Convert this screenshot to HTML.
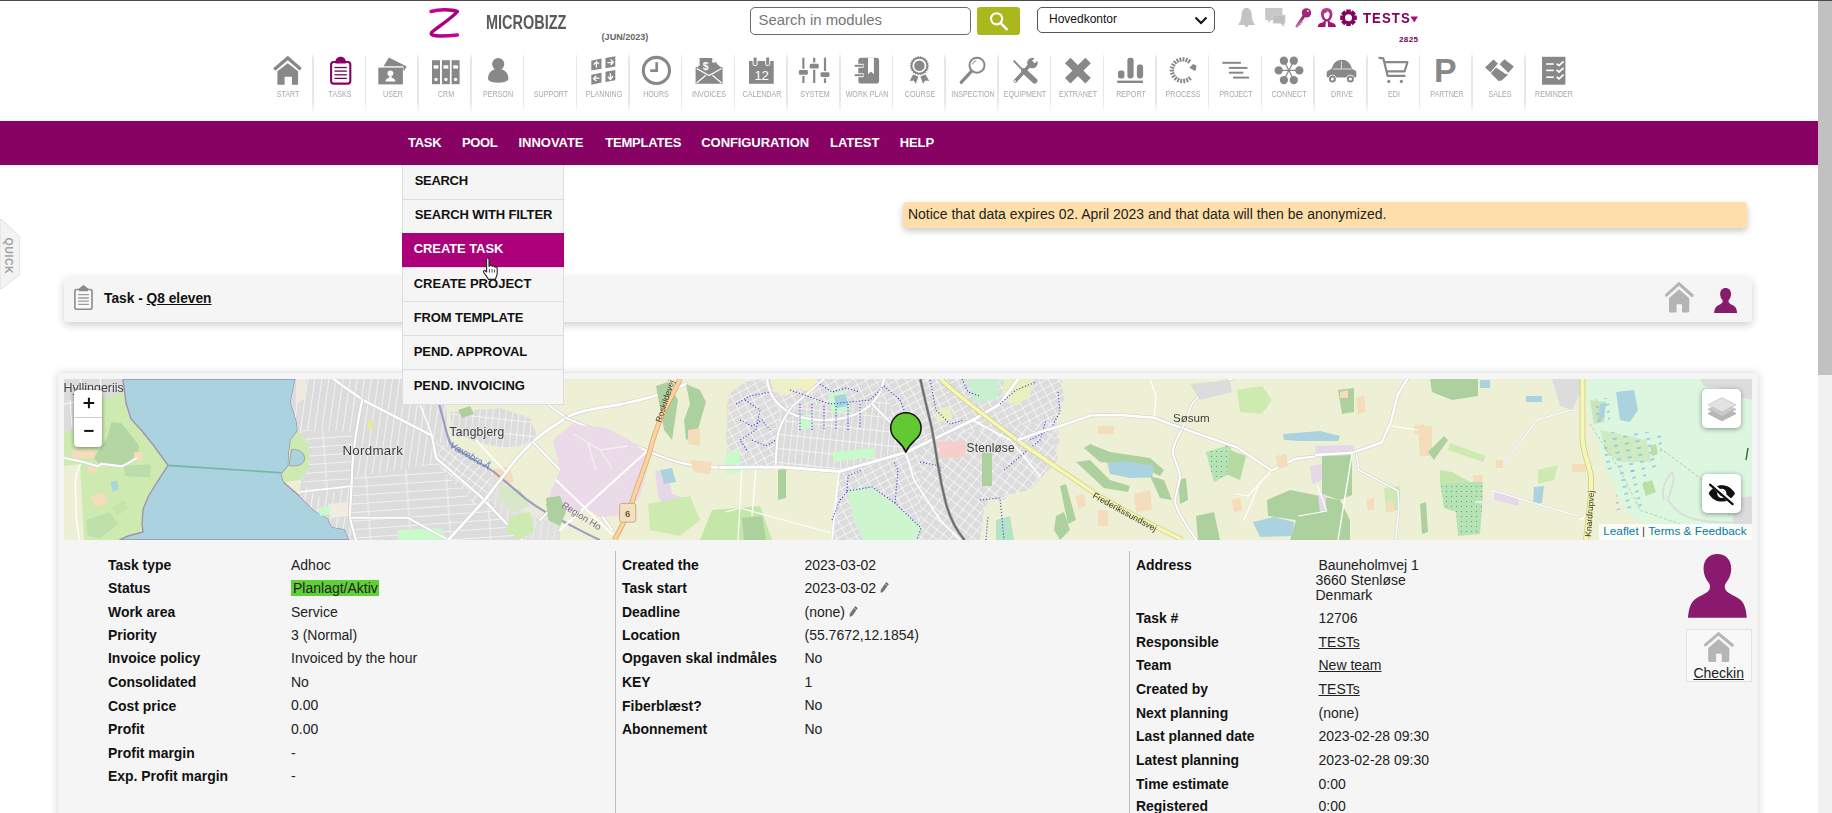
<!DOCTYPE html>
<html>
<head>
<meta charset="utf-8">
<title>Task</title>
<style>
*{box-sizing:border-box;margin:0;padding:0}
html,body{width:1832px;height:813px;overflow:hidden;background:#fff}
body{font-family:"Liberation Sans",sans-serif;position:relative;color:#111}
.abs{position:absolute}
.t{position:absolute;white-space:nowrap;line-height:1}
/* header */
#topline{left:0;top:0;width:1832px;height:1.2px;background:#4b494b}
#brand{left:486.2px;top:12.6px;font-size:19.6px;font-weight:bold;color:#5a5a5a;transform-origin:0 0;transform:scaleX(.738);letter-spacing:0}
#ver{left:601.6px;top:32.6px;font-size:9.05px;font-weight:bold;color:#666}
#search{left:750px;top:7px;width:221px;height:28px;border:1px solid #6b6b6b;border-radius:5px;background:#fff}
#search span{left:7.6px;top:4.6px;font-size:14.9px;color:#777}
#sbtn{left:977px;top:7px;width:43px;height:27.5px;background:#a9b91d;border-radius:3px}
#sel{left:1037px;top:7px;width:178px;height:26px;border:1px solid #555;border-radius:5px;background:#fff}
#sel span{left:11px;top:5.3px;font-size:12px;color:#111}
#uname{left:1362.8px;top:11.1px;font-size:14.6px;font-weight:bold;color:#85005f;letter-spacing:1.2px;transform-origin:0 0;transform:scaleX(.9)}
#unum{left:1399px;top:35.6px;font-size:8.1px;font-weight:bold;color:#7a0058;letter-spacing:.35px}
/* icon bar */
.sep{position:absolute;top:52px;width:1.6px;height:62px;background:linear-gradient(#fff,#e7e7e7 12%,#e7e7e7 80%,#fff)}
.lbl{position:absolute;top:89.6px;width:80px;margin-left:-38.6px;text-align:center;font-size:9.2px;color:#a8a8a8;white-space:nowrap;line-height:9px;transform:scaleX(.775)}
.ic{position:absolute;overflow:visible}
/* purple bar */
#bar{left:0;top:121px;width:1818px;height:43.5px;background:#870263}
.mi{position:absolute;top:135.8px;font-size:13px;font-weight:bold;color:#fff;white-space:nowrap;line-height:13px;letter-spacing:-.03px}
/* dropdown */
#dd{left:401.7px;top:164.5px;width:162.8px;height:240.3px;background:#f5f5f5;border-left:1px solid #ddd;border-right:1px solid #ddd;border-bottom:1px solid #ddd}
#dd div{position:absolute;left:0;width:160.8px;height:34.3px;border-top:1px solid #ddd;font-size:13px;font-weight:bold;color:#111;line-height:31px;padding-left:11px;white-space:nowrap;letter-spacing:-.1px}
#dd div.on{background:#ab0079;color:#fff;border-top-color:#ab0079}
/* notice */
#notice{left:903px;top:202px;width:844px;height:26px;background:#ffdfa9;border-radius:4px;box-shadow:0 3px 7px rgba(0,0,0,.22)}
#notice span{left:5px;top:5.6px;font-size:13.97px;color:#222}
/* title bar */
#tbar{left:64px;top:276.5px;width:1688px;height:45px;background:#f5f5f5;border-radius:4px;box-shadow:0 3px 8px rgba(0,0,0,.2)}
#tbar .tt{left:40px;top:15px;font-size:13.75px;font-weight:bold;color:#111}
/* main panel */
#panel{left:58px;top:373px;width:1700px;height:460px;background:#f5f5f5;border-radius:4px;box-shadow:0 0 8px rgba(0,0,0,.18)}
#map{left:64px;top:379px;width:1688px;height:161px;overflow:hidden;background:#eef0d5}
.lb{position:absolute;font-size:13.95px;font-weight:bold;color:#111;white-space:nowrap;line-height:16px}
.vl{position:absolute;font-size:14px;color:#222;white-space:nowrap;line-height:16px}
.vl u,.vl a{color:#222;text-decoration:underline}
.vd{position:absolute;top:551px;width:1.5px;height:270px;background:#bdbdbd}
/* scrollbar */
#sbt{left:1818px;top:0;width:14px;height:813px;background:#f1f1f1}
#sbh{left:1818px;top:0;width:14px;height:375px;background:#c1c1c1}
</style>
</head>
<body>
<!--HEADER-->
<svg class="abs" style="left:426px;top:5.7px" width="38" height="36" viewBox="0 0 38 36"><defs><linearGradient id="zg" x1="0" y1="0" x2="1" y2="1"><stop offset="0" stop-color="#d4009c"/><stop offset=".5" stop-color="#a8007c"/><stop offset="1" stop-color="#d000a0"/></linearGradient></defs><path d="M5 5.5 C12 3.5 25 3 31.5 5.5 C26 12 12 21 5.5 26.5 C4 29 8 30 14 30 C20 30 27 29.5 31.5 29" fill="none" stroke="url(#zg)" stroke-width="3.4" stroke-linecap="round" stroke-linejoin="round"/></svg>
<div class="t" id="brand">MICROBIZZ</div>
<div class="t" id="ver">(JUN/2023)</div>
<div class="abs" id="search"><span class="t">Search in modules</span></div>
<div class="abs" id="sbtn"><svg class="abs" style="left:11px;top:3px" width="22" height="22" viewBox="0 0 22 22"><circle cx="8.6" cy="8.8" r="5.6" fill="none" stroke="#fff" stroke-width="2.1"/><path d="M12.8 13.2 L18.6 19.2" stroke="#fff" stroke-width="2.6" stroke-linecap="round"/></svg></div>
<div class="abs" id="sel"><span class="t">Hovedkontor</span><svg class="abs" style="left:156px;top:8px" width="14" height="9" viewBox="0 0 14 9"><path d="M1.5 1.5 L7 7 L12.5 1.5" fill="none" stroke="#111" stroke-width="2"/></svg></div>
<!--HDRICONS-->
<svg class="abs" style="left:1236px;top:5px" width="124" height="24" viewBox="1236 5 124 24"><path d="M1246.6 8 C1249.8 8 1251.4 10.6 1251.6 14.2 C1251.8 18.6 1252.6 21.6 1254.6 24 L1254.6 25 L1238.5 25 L1238.5 24 C1240.6 21.6 1241.4 18.6 1241.6 14.2 C1241.8 10.6 1243.4 8 1246.6 8 Z" fill="#c3c3c3"/><path d="M1244.6 25 A2 1.9 0 0 0 1248.6 25 Z" fill="#c3c3c3"/>
<path d="M1265.2 8 H1282.4 V20 H1271.6 L1268 22.6 L1268 20 H1265.2 Z" fill="#c8c8c8"/>
<path d="M1273.1 15.1 H1285.1 V23.3 H1284 L1283.8 26.4 L1280.6 23.3 H1273.1 Z" fill="#bfbfbf" stroke="#d6d6d6" stroke-width=".6"/>
<defs><linearGradient id="kg" x1="0" y1="0" x2="0" y2="1"><stop offset="0" stop-color="#9a1a78"/><stop offset="1" stop-color="#bd78ad"/></linearGradient></defs>
<path d="M1303.6 16.6 L1297 26" stroke="url(#kg)" stroke-width="3" stroke-linecap="round" /><path d="M1300.4 21.6 L1302.4 23 M1299 23.8 L1300.6 25" stroke="#b870a8" stroke-width="1.2"/><circle cx="1306.5" cy="12.9" r="4.7" fill="#a0257f"/><circle cx="1307.9" cy="11" r="1.1" fill="#e9c6df"/>
<defs><linearGradient id="ug" x1="0" y1="0" x2="0" y2="1"><stop offset="0" stop-color="#c03a98"/><stop offset="1" stop-color="#a00f6c"/></linearGradient></defs>
<path d="M1326.7 8 C1330.6 8 1332.6 10.8 1332.4 14.4 C1332.2 17.4 1331 19.4 1329.4 20.6 C1329.6 21.8 1330.4 22.4 1332 22.8 C1334.6 23.5 1335.9 24.6 1335.9 26.9 L1317.9 26.9 C1317.9 24.6 1319 23.5 1321.6 22.8 C1323.2 22.4 1324 21.8 1324.2 20.6 C1322.6 19.4 1321.2 17.4 1321 14.4 C1320.8 10.8 1322.8 8 1326.7 8 Z" fill="url(#ug)"/>
<path d="M1327 11.4 C1329 11.6 1329.8 13 1329.6 15 C1329.4 17.4 1328.2 19.2 1326.7 19.2 C1325.2 19.2 1324 17.4 1323.8 15 C1323.7 13.8 1324.2 13.2 1325 13 C1326 12.8 1326.6 12.2 1327 11.4 Z" fill="#fff"/><path d="M1325.9 21.6 L1327.7 21.6 L1328.2 26.9 L1325.4 26.9 Z" fill="#fff"/>
<polygon points="1356.80,15.55 1356.80,20.05 1354.37,20.08 1354.26,20.34 1355.96,22.08 1352.78,25.26 1351.04,23.56 1350.78,23.67 1350.75,26.10 1346.25,26.10 1346.22,23.67 1345.96,23.56 1344.22,25.26 1341.04,22.08 1342.74,20.34 1342.63,20.08 1340.20,20.05 1340.20,15.55 1342.63,15.52 1342.74,15.26 1341.04,13.52 1344.22,10.34 1345.96,12.04 1346.22,11.93 1346.25,9.50 1350.75,9.50 1350.78,11.93 1351.04,12.04 1352.78,10.34 1355.96,13.52 1354.26,15.26 1354.37,15.52" fill="#86005f"/><circle cx="1348.5" cy="17.8" r="3.5" fill="#fff"/></svg>
<!--/HDRICONS-->
<div class="t" id="uname">TESTS</div>
<svg class="abs" style="left:1410px;top:16px" width="9" height="7" viewBox="0 0 9 7"><path d="M0.5 0.5 L8 0.5 L4.25 6.5 Z" fill="#a0107a"/></svg>
<div class="t" id="unum">2825</div>
<!--ICONBAR-->
<svg class="abs" style="left:260px;top:50px" width="1320" height="40" viewBox="260 50 1320 40"><g id="house"><polyline points="274.3,69.6 287.8,58 300.7,69.3" fill="none" stroke="#888" stroke-width="3.3"/><polygon points="277.4,71.3 287.8,63.2 298.1,71.3 298.1,84.75 291.9,84.75 291.9,76.75 284.6,76.75 284.6,84.75 277.4,84.75" fill="#888"/></g>
<rect x="331.1" y="62" width="19.2" height="21.6" rx="2.6" fill="#fff" stroke="#8b0068" stroke-width="2.1"/>
<path d="M335.4 63.4 L335.4 61.6 C335.6 55.2 345.6 55.2 345.8 61.6 L345.8 63.4 Z" fill="#8b0068"/>
<path d="M334.5 67.5 H346.8" stroke="#6a0a50" stroke-width="1.3"/>
<path d="M334.5 71.1 H346.8" stroke="#6a0a50" stroke-width="1.3"/>
<path d="M334.5 74.8 H346.8" stroke="#6a0a50" stroke-width="1.3"/>
<path d="M334.5 78.4 H346.8" stroke="#6a0a50" stroke-width="1.3"/>
<polygon points="383.6,66.2 388.9,57.4 406.8,66.6 404.3,70.5 403.4,70.5 403.4,66.2" fill="#888"/>
<rect x="378.3" y="67.6" width="24.6" height="16.8" fill="#888"/>
<circle cx="390.4" cy="73.3" r="2.9" fill="#fff"/><path d="M385.4 81.6 Q385.6 78.6 388.6 78 Q389.4 77.4 389.2 76.2 L391.6 76.2 Q391.4 77.4 392.2 78 Q395.2 78.6 395.4 81.6 Z" fill="#fff"/>
<rect x="432.0" y="60.2" width="8" height="24" fill="#888"/><rect x="433.6" y="65.3" width="4.8" height="3.3" fill="#fff"/><circle cx="436.0" cy="79.4" r="1.7" fill="#fff"/>
<rect x="441.9" y="60.2" width="8" height="24" fill="#888"/><rect x="443.5" y="65.3" width="4.8" height="3.3" fill="#fff"/><circle cx="445.9" cy="79.4" r="1.7" fill="#fff"/>
<rect x="451.6" y="60.2" width="8" height="24" fill="#888"/><rect x="453.20000000000005" y="65.3" width="4.8" height="3.3" fill="#fff"/><circle cx="455.6" cy="79.4" r="1.7" fill="#fff"/>
<circle cx="498.2" cy="64.1" r="6.1" fill="#888"/><path d="M488 78.6 C488 72.6 492.5 68.8 498.2 68.8 C503.9 68.8 508.4 72.6 508.4 78.6 C508.4 81.6 503.6 82.7 498.2 82.7 C492.8 82.7 488 81.6 488 78.6 Z" fill="#888"/>
<polygon points="591.3,60.7 601.5,58.6 601.5,68.8 591.3,70.6" fill="#888"/><polygon points="605.5,58 615.3,56.2 615.3,66.4 605.5,68.2" fill="#888"/><polygon points="591.3,74.8 601.5,72.7 601.5,82.6 591.3,84.7" fill="#888"/><polygon points="605.5,71.8 615.3,70 615.3,80.2 605.5,82" fill="#888"/>
<g fill="none" stroke="#fff" stroke-width="1.3"><path d="M596.4 67.6 V61.6 M593.8 64.6 L596.4 61.6 L599 64"/><path d="M607.4 62.6 H613.2 M610.6 59.6 L613.2 62 L610.8 65"/><path d="M599.4 78.2 H593.6 M596.2 75.6 L593.6 78.6 L596.4 81"/><path d="M610.4 73.2 V79.2 M607.8 76.8 L610.4 79.4 L613 76"/></g>
<circle cx="656.4" cy="70.45" r="13.1" fill="none" stroke="#888" stroke-width="3.1"/><path d="M656.7 62.3 V70.6 H650.2" fill="none" stroke="#888" stroke-width="2.7"/>
<path d="M695.6 67.4 L699.6 64.8 L699.6 58 L712.2 58 L716.8 62.4 L716.8 64.2 L718.6 64.8 L722.6 67.4 L722.6 83.8 L695.6 83.8 Z" fill="#888"/>
<path d="M712.2 58 L712.2 62.4 L716.8 62.4 Z" fill="#fff"/><path d="M699.8 65 L697 67 M718.4 65 L721.4 67" stroke="#fff" stroke-width=".9"/>
<path d="M696.6 68.4 L709.1 75.6 L721.6 68.4 M696.6 83 L705.8 75.2 M721.6 83 L712.4 75.2" fill="none" stroke="#fff" stroke-width="1.2"/>
<text x="705.6" y="70.2" font-size="10.5" font-weight="bold" fill="#fff" text-anchor="middle" font-family="Liberation Sans">$</text>
<rect x="749" y="61" width="24.7" height="22.8" fill="#888"/>
<rect x="753.1" y="57" width="4" height="8.4" rx="1" fill="#888" stroke="#fff" stroke-width="1"/>
<rect x="765.7" y="57" width="4" height="8.4" rx="1" fill="#888" stroke="#fff" stroke-width="1"/>
<text x="761.5" y="79.6" font-size="13.2" fill="#fff" text-anchor="middle" font-family="Liberation Sans" letter-spacing="-.3">12</text>
<path d="M803.4 57.8 V68.80000000000001 M803.4 76.0 V83" stroke="#888" stroke-width="2.2"/><rect x="798.9" y="70.0" width="9" height="4.8" rx="1.4" fill="#888"/>
<path d="M814.2 57.8 V62.6 M814.2 69.8 V83" stroke="#888" stroke-width="2.2"/><rect x="809.7" y="63.800000000000004" width="9" height="4.8" rx="1.4" fill="#888"/>
<path d="M825.0 57.8 V71.0 M825.0 78.19999999999999 V83" stroke="#888" stroke-width="2.2"/><rect x="820.5" y="72.19999999999999" width="9" height="4.8" rx="1.4" fill="#888"/>
<rect x="858.3" y="57.8" width="20.8" height="25.7" rx="2.8" fill="#888"/><path d="M868 57.8 H873.9 V74.2 L870.95 71.6 L868 74.2 Z" fill="#fff"/>
<path d="M854.7 65.8 H863.6" stroke="#fff" stroke-width="4"/><path d="M854.7 65.8 H863" stroke="#888" stroke-width="2"/>
<path d="M854.7 75.2 H863.6" stroke="#fff" stroke-width="4"/><path d="M854.7 75.2 H863" stroke="#888" stroke-width="2"/>
<polygon points="929.10,65.70 927.91,66.92 928.71,68.43 927.22,69.27 927.56,70.94 925.90,71.33 925.75,73.03 924.05,72.93 923.43,74.52 921.82,73.95 920.78,75.30 919.40,74.30 918.02,75.30 916.98,73.95 915.37,74.52 914.75,72.93 913.05,73.03 912.90,71.33 911.24,70.94 911.58,69.27 910.09,68.43 910.89,66.92 909.70,65.70 910.89,64.48 910.09,62.97 911.58,62.13 911.24,60.46 912.90,60.07 913.05,58.37 914.75,58.47 915.37,56.88 916.98,57.45 918.02,56.10 919.40,57.10 920.78,56.10 921.82,57.45 923.43,56.88 924.05,58.47 925.75,58.37 925.90,60.07 927.56,60.46 927.22,62.13 928.71,62.97 927.91,64.48" fill="#888"/><circle cx="919.4" cy="65.7" r="6.1" fill="none" stroke="#fff" stroke-width="1.7"/>
<polygon points="913.2,74.4 918.4,76.6 915.8,83.8 913.6,80.4 909.6,81" fill="#888"/><polygon points="925.6,74.4 920.4,76.6 923,83.8 925.2,80.4 929.2,81" fill="#888"/>
<circle cx="977" cy="65.2" r="7.5" fill="none" stroke="#888" stroke-width="2"/><path d="M972.4 64.4 A4.8 4.8 0 0 1 976.4 60.6" fill="none" stroke="#888" stroke-width="1"/><path d="M971.6 71.2 L961.2 82.4" stroke="#888" stroke-width="3.2" stroke-linecap="round"/>
<path d="M1013.6 60.6 L1025 72.4" stroke="#888" stroke-width="2"/><path d="M1024 71 L1034.6 80.8" stroke="#888" stroke-width="5.6" stroke-linecap="round"/>
<path d="M1015.4 81 L1030.4 64.4" stroke="#888" stroke-width="3.6" stroke-linecap="round"/><circle cx="1015.2" cy="81.2" r="0.9" fill="#fff"/>
<circle cx="1032.4" cy="63" r="5.3" fill="#888"/><path d="M1033.4 62 L1039 56.4" stroke="#fff" stroke-width="3.6"/>
<g transform="translate(1077.9 70.6)"><rect x="-14.4" y="-3.9" width="28.8" height="7.8" fill="#888" transform="rotate(45)"/><rect x="-14.4" y="-3.9" width="28.8" height="7.8" fill="#888" transform="rotate(-45)"/></g>
<rect x="1118" y="70.6" width="6.4" height="7.8" rx="2.2" fill="#888"/><rect x="1127.4" y="57.8" width="6.2" height="20.6" rx="2.4" fill="#888"/><rect x="1136.9" y="64.6" width="6.2" height="13.8" rx="2.4" fill="#888"/><rect x="1117.2" y="80.6" width="25.8" height="2.4" fill="#888"/>
<path d="M1188.29 76.86 L1191.06 80.16 M1186.24 78.15 L1187.99 82.08 M1183.91 78.82 L1184.51 83.07 M1181.49 78.82 L1180.89 83.07 M1179.16 78.15 L1177.41 82.08 M1177.11 76.86 L1174.34 80.16 M1175.49 75.06 L1171.92 77.47 M1174.43 72.89 L1170.34 74.22 M1174.01 70.50 L1169.71 70.65 M1174.26 68.10 L1170.09 67.06 M1175.17 65.85 L1171.44 63.70 M1176.66 63.94 L1173.67 60.85 M1178.62 62.52 L1176.60 58.72 M1180.89 61.69 L1180.00 57.48 M1183.31 61.52 L1183.61 57.23 M1185.68 62.02 L1187.15 57.98 M1187.81 63.16 L1190.34 59.68" stroke="#888" stroke-width="1.9"/>
<polygon points="1193,64 1196.6,65.8 1195.4,71.3 1189.4,67.7" fill="#888"/>
<path d="M1222.3 62.8 H1240.9" stroke="#888" stroke-width="2"/>
<path d="M1228.9 67.9 H1247.5" stroke="#888" stroke-width="2"/>
<path d="M1228.9 72.7 H1243.3" stroke="#888" stroke-width="2"/>
<path d="M1233.1 77.6 H1249" stroke="#888" stroke-width="2"/>
<path d="M1288.9 70.4 L1283.9 60.7" stroke="#888" stroke-width="1.2"/><circle cx="1283.9" cy="60.7" r="4.15" fill="#888"/>
<path d="M1288.9 70.4 L1293.8 60.7" stroke="#888" stroke-width="1.2"/><circle cx="1293.8" cy="60.7" r="4.15" fill="#888"/>
<path d="M1288.9 70.4 L1278.7 70.4" stroke="#888" stroke-width="1.2"/><circle cx="1278.7" cy="70.4" r="4.15" fill="#888"/>
<path d="M1288.9 70.4 L1299.3 70.4" stroke="#888" stroke-width="1.2"/><circle cx="1299.3" cy="70.4" r="4.15" fill="#888"/>
<path d="M1288.9 70.4 L1283.9 80.1" stroke="#888" stroke-width="1.2"/><circle cx="1283.9" cy="80.1" r="4.15" fill="#888"/>
<path d="M1288.9 70.4 L1293.8 80.1" stroke="#888" stroke-width="1.2"/><circle cx="1293.8" cy="80.1" r="4.15" fill="#888"/>
<circle cx="1288.9" cy="70.4" r="1.5" fill="#888"/>
<path d="M1328.4 70.6 Q1331.4 69.4 1332 68 Q1334 61 1339.5 60 Q1343.4 59.4 1346 60.6 Q1350.6 63 1351.8 68.6 Q1353 69.8 1354.8 70.2 Q1356.3 70.8 1356.3 72.4 L1356.3 76 Q1356.3 77.6 1354.6 77.6 L1328.4 77.6 Q1326.7 77.6 1326.7 76 L1326.7 72.4 Q1326.7 71 1328.4 70.6 Z" fill="#888"/>
<path d="M1334.4 68.4 Q1335.6 63 1339.6 62 L1340.6 62 L1340.6 68.4 Z M1342.2 62 L1344.6 62 Q1348.4 63.4 1349.6 68.4 L1342.2 68.4 Z" fill="#fff" opacity=".0"/>
<path d="M1341.4 61 V69 M1333 69 H1351.4" stroke="#fff" stroke-width=".8" opacity=".9"/>
<circle cx="1332.4" cy="79" r="4.3" fill="#fff"/><circle cx="1332.4" cy="79" r="3.5" fill="#888"/><circle cx="1332.4" cy="79" r="1.5" fill="#fff"/>
<circle cx="1350.4" cy="79" r="4.3" fill="#fff"/><circle cx="1350.4" cy="79" r="3.5" fill="#888"/><circle cx="1350.4" cy="79" r="1.5" fill="#fff"/>
<path d="M1379.4 57.8 L1383.4 58.4 L1387.6 75.8 L1404.6 75.8" fill="none" stroke="#888" stroke-width="2.2" stroke-linecap="round" stroke-linejoin="round"/><path d="M1384.4 62.2 L1407.4 62.2 L1404.6 71.4 L1386.6 71.4" fill="none" stroke="#888" stroke-width="2.2" stroke-linejoin="round"/><circle cx="1388.8" cy="81.4" r="1.6" fill="#888"/><circle cx="1401.4" cy="81.4" r="1.6" fill="#888"/>
<text x="1433.9" y="82" font-size="33.8" font-weight="bold" fill="#888" font-family="Liberation Sans" textLength="22.6" lengthAdjust="spacingAndGlyphs">P</text>
<g id="sales"><polygon points="1485,67.6 1493.4,59.6 1498,63.6 1490.4,72.2" fill="#888"/><polygon points="1504.4,59.2 1513.9,66.6 1508.4,72.8 1499.6,64.2" fill="#888"/><polygon points="1490.8,73.2 1496,67.6 1506.4,74.6 1499,81.6" fill="#888"/><path d="M1500.6 80.4 L1507.4 74.2" stroke="#888" stroke-width="1.6"/></g>
<rect x="1542" y="56.8" width="23.4" height="27.9" fill="#888"/>
<path d="M1546.2 64 H1553.8" stroke="#fff" stroke-width="1.6"/><path d="M1556.6 63.6 L1559 65.6 L1563.6 61.4" fill="none" stroke="#fff" stroke-width="1.7"/>
<path d="M1546.2 70.4 H1553.8" stroke="#fff" stroke-width="1.6"/><path d="M1556.6 70.0 L1559 72.0 L1563.6 67.80000000000001" fill="none" stroke="#fff" stroke-width="1.7"/>
<path d="M1546.2 77.2 H1553.8" stroke="#fff" stroke-width="1.6"/><path d="M1556.6 76.8 L1559 78.8 L1563.6 74.60000000000001" fill="none" stroke="#fff" stroke-width="1.7"/></svg>
<div class="lbl" style="left:286.2px">START</div>
<div class="lbl" style="left:338.9px">TASKS</div>
<div class="lbl" style="left:391.6px">USER</div>
<div class="lbl" style="left:444.2px">CRM</div>
<div class="lbl" style="left:497.0px">PERSON</div>
<div class="lbl" style="left:549.7px">SUPPORT</div>
<div class="lbl" style="left:602.4px">PLANNING</div>
<div class="lbl" style="left:655.0px">HOURS</div>
<div class="lbl" style="left:707.8px">INVOICES</div>
<div class="lbl" style="left:760.5px">CALENDAR</div>
<div class="lbl" style="left:813.2px">SYSTEM</div>
<div class="lbl" style="left:865.9px">WORK PLAN</div>
<div class="lbl" style="left:918.5px">COURSE</div>
<div class="lbl" style="left:971.2px">INSPECTION</div>
<div class="lbl" style="left:1024.0px">EQUIPMENT</div>
<div class="lbl" style="left:1076.7px">EXTRANET</div>
<div class="lbl" style="left:1129.4px">REPORT</div>
<div class="lbl" style="left:1182.0px">PROCESS</div>
<div class="lbl" style="left:1234.8px">PROJECT</div>
<div class="lbl" style="left:1287.5px">CONNECT</div>
<div class="lbl" style="left:1340.2px">DRIVE</div>
<div class="lbl" style="left:1392.8px">EDI</div>
<div class="lbl" style="left:1445.5px">PARTNER</div>
<div class="lbl" style="left:1498.2px">SALES</div>
<div class="lbl" style="left:1552.2px">REMINDER</div>
<div class="sep" style="left:312.0px"></div>
<div class="sep" style="left:364.7px"></div>
<div class="sep" style="left:417.4px"></div>
<div class="sep" style="left:470.1px"></div>
<div class="sep" style="left:522.8px"></div>
<div class="sep" style="left:575.5px"></div>
<div class="sep" style="left:628.2px"></div>
<div class="sep" style="left:680.9px"></div>
<div class="sep" style="left:733.6px"></div>
<div class="sep" style="left:786.3px"></div>
<div class="sep" style="left:839.0px"></div>
<div class="sep" style="left:891.7px"></div>
<div class="sep" style="left:944.4px"></div>
<div class="sep" style="left:997.1px"></div>
<div class="sep" style="left:1049.8px"></div>
<div class="sep" style="left:1102.5px"></div>
<div class="sep" style="left:1155.2px"></div>
<div class="sep" style="left:1207.9px"></div>
<div class="sep" style="left:1260.6px"></div>
<div class="sep" style="left:1313.3px"></div>
<div class="sep" style="left:1366.0px"></div>
<div class="sep" style="left:1418.7px"></div>
<div class="sep" style="left:1471.4px"></div>
<div class="sep" style="left:1524.1px"></div>
<!--/ICONBAR-->
<!--BAR-->
<div class="abs" id="bar"></div>
<div class="mi" style="left:408px;letter-spacing:-.3px">TASK</div>
<div class="mi" style="left:461.9px;letter-spacing:-.33px">POOL</div>
<div class="mi" style="left:518.5px">INNOVATE</div>
<div class="mi" style="left:605.2px;letter-spacing:-.2px">TEMPLATES</div>
<div class="mi" style="left:701.3px;letter-spacing:-.08px">CONFIGURATION</div>
<div class="mi" style="left:830px">LATEST</div>
<div class="mi" style="left:899.7px;letter-spacing:-.1px">HELP</div>
<!--NOTICE-->
<div class="abs" id="notice"><span class="t">Notice that data expires 02. April 2023 and that data will then be anonymized.</span></div>
<!--TITLEBAR-->
<div class="abs" id="tbar"><div class="t tt">Task - <span style="text-decoration:underline">Q8 eleven</span></div></div>
<!--PANEL-->
<div class="abs" id="panel"></div>
<div class="abs" id="map">
<!--MAPSVG-->
<svg class="abs" style="left:0;top:0;filter:blur(.35px)" width="1688" height="161" viewBox="64 379 1688 161"><defs>
<pattern id="pv" width="7" height="40" patternUnits="userSpaceOnUse" patternTransform="rotate(8)"><rect width="7" height="40" fill="#dddcdc"/><path d="M0.5 0 V40" stroke="#fff" stroke-width=".7" stroke-opacity=".9"/></pattern>
<pattern id="ph" width="40" height="8.5" patternUnits="userSpaceOnUse" patternTransform="rotate(-4)"><rect width="40" height="8.5" fill="#dddcdc"/><path d="M0 .5 H40" stroke="#fff" stroke-width=".7" stroke-opacity=".9"/><path d="M12 .5 V8.5" stroke="#fff" stroke-width=".6"/></pattern>
<pattern id="pg" width="9" height="7" patternUnits="userSpaceOnUse" patternTransform="rotate(-28)"><rect width="9" height="7" fill="#dddcdc"/><path d="M0 .5 H9 M.5 0 V7" stroke="#fff" stroke-width=".68" stroke-opacity=".9"/></pattern>
<pattern id="pg2" width="6.5" height="14" patternUnits="userSpaceOnUse" patternTransform="rotate(6)"><rect width="6.5" height="14" fill="#dddcdc"/><path d="M0 .5 H6.5 M.5 0 V14" stroke="#fff" stroke-width=".68" stroke-opacity=".9"/></pattern>
<pattern id="pg3" width="8" height="8" patternUnits="userSpaceOnUse" patternTransform="rotate(38)"><rect width="8" height="8" fill="#dddcdc"/><path d="M0 .5 H8 M.5 0 V8" stroke="#fff" stroke-width=".68" stroke-opacity=".9"/></pattern>
<pattern id="dots" width="5" height="5" patternUnits="userSpaceOnUse"><rect width="5" height="5" fill="#b5e3b5"/><circle cx="1.5" cy="1.5" r=".6" fill="#5a9a5a"/></pattern>
<pattern id="wet" width="11" height="7" patternUnits="userSpaceOnUse" patternTransform="rotate(-12)"><rect width="11" height="7" fill="none"/><path d="M1 2 H5" stroke="#5aa9e6" stroke-width=".9"/></pattern>
</defs>
<rect x="64" y="379" width="1688" height="161" fill="#eef0d5"/>
<polygon points="64,379 124,379 126,403 131,419 142,431 154,446 162,457 168,465.3 156.5,483 148,497 143,509.5 142,524 143,532 128,536 119.5,540 64,540" fill="#cdebb0"/>
<polygon points="64,379 123,379 125,392 112,397 92,396 80,400 74,430 64,432" fill="#dddcdc"/><path d="M66 386 L120 389 M80 379 L84 398 M100 379 L102 397 M64 404 L76 402 M70 400 L72 428" stroke="#fff" stroke-width="1"/>
<polygon points="64,466 80,464 82,500 84,540 64,540" fill="#eef0d5"/>
<polygon points="111.3,422.2 121.6,423.2 139,445.8 138,458.1 121.6,466.3 99,464.3 93.9,458.1 107.2,437.6" fill="#b4d6a2"/><polygon points="123.6,466 150.3,464.3 150.3,477.6 125,476" fill="#bcdcaa"/>
<polygon points="72.3,450 94.9,450 94.9,458.1 72.3,458.1" fill="#f5dcba"/><polygon points="87.7,466.3 97,466.3 97,472.5 87.7,472.5" fill="#f5dcba"/><polygon points="90.8,496 104,492 108.2,503 95,507" fill="#f5dcba"/><polygon points="133.9,452 142.1,452 142.1,461.2 133.9,461.2" fill="#f5dcba"/>
<polygon points="110.3,482 117,480.7 118.5,489 113,492" fill="#aad3df"/>
<polygon points="86,520 110,512 118,524 100,538 88,536" fill="#bfe0a8"/><polygon points="112,508 124,500 128,508 118,516" fill="#c4e6ac"/>
<path d="M64.1 458.1 L80.5 461.2 L98 466.3 L101 463.9 L121.6 466.3 C128 464 133 460 137 457.7" fill="none" stroke="#d0d0d0" stroke-width="3"/><path d="M64.1 458.1 L80.5 461.2 L98 466.3 L101 463.9 L121.6 466.3 C128 464 133 460 137 457.7" fill="none" stroke="#fff" stroke-width="2"/><path d="M80.5 464.3 C76 474 75 480 75.4 482.8 L76.4 519.7 L79.5 540" fill="none" stroke="#fff" stroke-width="1.5"/>
<polygon points="122.9,379 295.4,379 290.7,402.5 296.6,421.3 297.8,430.7 290.7,440 289,452 288.4,465.9 281.4,474 283.7,482.3 300,496.4 314.2,510.5 328.3,518.7 331.8,526.9 344.7,529.3 349.4,540 119.5,540 128,536 143,532 142,524 143,509.5 148,497 156.5,483 168,465.3 162,457 154,446 142,431 131,419 126,403" fill="#aad3df" stroke="#9a70a0" stroke-width="1.4" stroke-opacity=".7"/>
<path d="M167.5 465.4 L281.4 472.8" stroke="#72b6a4" stroke-width="1.6"/>
<polygon points="297.8,430.7 306,440 310,455 309,470 300,480 283.7,482.3 281.4,474 288.4,465.9 289,452 290.7,440" fill="#cdebb0"/>
<path d="M291.5 449.5 C300 449 305 453 304.6 459 C304 465 296 467 289 465.5 Z" fill="#aad3df" stroke="#9a7a9a" stroke-width=".9" stroke-opacity=".7"/>
<polygon points="295.4,379 512,379 505,395 470,400 448,405 446,430 455,447 470,458 488,468 500,480 515,495 522,510 540,520 560,522 560,540 349.4,540 344.7,529.3 331.8,526.9 328.3,518.7 314.2,510.5 300,496.4 300,480 309,470 310,455 306,440 297.8,430.7 296.6,421.3 290.7,402.5" fill="url(#pv)"/>
<polygon points="300,430 352,432 351,486 318,498 302,482 310,462 309,445" fill="url(#ph)"/>
<polygon points="352,478 440,462 480,498 522,540 356,540 350,518" fill="url(#ph)"/>
<polygon points="436,440 470,462 500,484 476,506 440,468" fill="url(#pg3)"/>
<polygon points="296,379 306,379 306,398 296,404" fill="#eeeadf"/>
<polygon points="328,504 348,502 348,516 330,518" fill="#f0ece0"/><polygon points="318,508 330,506 330,514 320,516" fill="#c8facc"/><polygon points="398,530 440,528 448,540 398,540" fill="#c8facc"/>
<polygon points="368,420 373,420 373,430 368,430" fill="#e8e8a0"/>
<polygon points="446,405 520,402 540,420 560,421 560,520 540,520 522,510 515,495 500,480 488,468 470,458 455,447 448,430" fill="#eef0d5"/>
<polygon points="450,412 500,408 530,418 538,438 520,446 500,448 470,440 452,430" fill="url(#pg2)"/>
<polygon points="458,410 470,406 474,414 462,418" fill="#add19e"/>
<polygon points="492,470 510,466 514,482 498,486" fill="#f5dcba"/><polygon points="500,484 520,490 530,506 512,512 500,498" fill="#cdebb0"/><polygon points="546,504 560,500 560,516 548,514" fill="#add19e"/>
<polygon points="490,476 506,480 524,500 560,522 560,540 522,540 500,512 486,496" fill="#e4e4e0" opacity=".5"/>
<path d="M439.2 404.8 C444 420 446 434 450.5 443.8 C462 454 474 460 485.4 466.4 C492 470 497 474 501.9 478.7 L526.5 499.3 C538 508 548 514 560 519.8 C580 530 590 536 600 540" fill="none" stroke="#8f8fc0" stroke-width="2.2" stroke-opacity=".85"/>
<path d="M333.4 379 L362.2 399.6 L432 435.6 L436.1 458.2 L481.3 497.2 L522.4 540" fill="none" stroke="#cfcfcf" stroke-width="3.5999999999999996" stroke-linecap="round" stroke-linejoin="round"/>
<path d="M333.4 379 L362.2 399.6 L432 435.6 L436.1 458.2 L481.3 497.2 L522.4 540" fill="none" stroke="#fff" stroke-width="2.4" stroke-linecap="round" stroke-linejoin="round"/>
<path d="M362.2 399.6 C356 430 352 460 351.9 478.7 L349.8 517.7 L356 540" fill="none" stroke="#cfcfcf" stroke-width="3.4000000000000004" stroke-linecap="round" stroke-linejoin="round"/>
<path d="M362.2 399.6 C356 430 352 460 351.9 478.7 L349.8 517.7 L356 540" fill="none" stroke="#fff" stroke-width="2.2" stroke-linecap="round" stroke-linejoin="round"/>
<path d="M349.8 517.7 L407.4 517.7 L448.4 540" fill="none" stroke="#cfcfcf" stroke-width="3.2" stroke-linecap="round" stroke-linejoin="round"/>
<path d="M349.8 517.7 L407.4 517.7 L448.4 540" fill="none" stroke="#fff" stroke-width="2.0" stroke-linecap="round" stroke-linejoin="round"/>
<path d="M448.4 540 L485.4 499.3 C494 488 500 480 506 472.5 C514 460 524 450 532.7 441.7 C542 433 552 427 566 418 C580 410 600 408 622 404 C640 400 660 396 686 384" fill="none" stroke="#cfcfcf" stroke-width="4.0" stroke-linecap="round" stroke-linejoin="round"/>
<path d="M448.4 540 L485.4 499.3 C494 488 500 480 506 472.5 C514 460 524 450 532.7 441.7 C542 433 552 427 566 418 C580 410 600 408 622 404 C640 400 660 396 686 384" fill="none" stroke="#fff" stroke-width="2.8" stroke-linecap="round" stroke-linejoin="round"/>
<path d="M300 492 L352 486" fill="none" stroke="#fff" stroke-width="1.6" stroke-linecap="round" stroke-linejoin="round"/>
<path d="M410 379 L432 435" fill="none" stroke="#fff" stroke-width="1.3" stroke-linecap="round" stroke-linejoin="round"/>
<path d="M560 379 C556 392 552 400 548 404 C554 410 562 414 566 418" fill="none" stroke="#cfcfcf" stroke-width="3.2" stroke-linecap="round" stroke-linejoin="round"/>
<path d="M560 379 C556 392 552 400 548 404 C554 410 562 414 566 418" fill="none" stroke="#fff" stroke-width="2.0" stroke-linecap="round" stroke-linejoin="round"/>
<path d="M566 418 C590 428 620 440 650 452 C670 460 690 468 720 467.4" fill="none" stroke="#cfcfcf" stroke-width="3.5999999999999996" stroke-linecap="round" stroke-linejoin="round"/>
<path d="M566 418 C590 428 620 440 650 452 C670 460 690 468 720 467.4" fill="none" stroke="#fff" stroke-width="2.4" stroke-linecap="round" stroke-linejoin="round"/>
<path d="M532.7 441.7 L560 470 L596 508 L612 530" fill="none" stroke="#cfcfcf" stroke-width="3.4000000000000004" stroke-linecap="round" stroke-linejoin="round"/>
<path d="M532.7 441.7 L560 470 L596 508 L612 530" fill="none" stroke="#fff" stroke-width="2.2" stroke-linecap="round" stroke-linejoin="round"/>
<path d="M620 440 L560 500 L540 520" fill="none" stroke="#cfcfcf" stroke-width="3.2" stroke-linecap="round" stroke-linejoin="round"/>
<path d="M620 440 L560 500 L540 520" fill="none" stroke="#fff" stroke-width="2.0" stroke-linecap="round" stroke-linejoin="round"/>
<path d="M506 472.5 L476 440" fill="none" stroke="#fff" stroke-width="1.6" stroke-linecap="round" stroke-linejoin="round"/>
<polygon points="553,440 572,424 606,428 626,438 646,452 647,470 640,496 626,515 600,517 588,510 560,512 548,498 560,470" fill="#ebdbe8"/>
<path d="M574 434 L600 450 L628 446 M588 444 L596 470 M600 450 L612 468" fill="none" stroke="#f6eef4" stroke-width="1.3"/>
<path d="M646 452 L560 530" fill="none" stroke="#fff" stroke-width="2.0" stroke-linecap="round" stroke-linejoin="round"/>
<path d="M556 480 L612 534" fill="none" stroke="#fff" stroke-width="1.8" stroke-linecap="round" stroke-linejoin="round"/>
<polygon points="655,470 668,474 672,494 690,500 694,512 668,512 658,496" fill="#e6d8e8"/><polygon points="660,470 672,468 676,482 664,484" fill="#aad3df"/>
<polygon points="686,384 700,390 706,402 696,436 686,440 684,420 690,404" fill="#add19e"/><polygon points="656,386 668,382 678,400 672,440 664,430" fill="#add19e"/>
<polygon points="726,404 742,400 744,418 728,420" fill="#f5dcba"/><polygon points="688,430 700,428 700,446 688,444" fill="#f5dcba"/><polygon points="690,460 712,462 710,474 694,472" fill="#f5dcba"/>
<polygon points="648,504 690,496 700,520 680,536 650,530" fill="#cdebb0"/><polygon points="712,510 760,506 772,540 700,540" fill="#c4e6a8"/><polygon points="742,518 762,516 766,540 744,540" fill="#add19e"/><polygon points="778,470 786,468 786,498 778,500" fill="#add19e"/>
<polygon points="724,460 746,454 748,470 726,474" fill="#c8facc"/><polygon points="546,498 560,496 566,512 560,526 548,520" fill="#add19e"/><polygon points="510,516 530,512 534,530 520,540 506,530" fill="#cdebb0"/>
<path d="M726 512 L740 508 L820 530 L864 540 M742 467 L738 540 M756 468 L752 516" fill="none" stroke="#fff" stroke-width="1.2"/>
<path d="M680.2 379 C672 396 665 408 661.4 416.6 C656 430 652 442 649.7 451.8 C646 464 642 474 638 484.7 C635 493 633 499 630.9 505.8 C626 518 620 530 614.5 540" fill="none" stroke="#d9a45e" stroke-width="5"/>
<path d="M680.2 379 C672 396 665 408 661.4 416.6 C656 430 652 442 649.7 451.8 C646 464 642 474 638 484.7 C635 493 633 499 630.9 505.8 C626 518 620 530 614.5 540" fill="none" stroke="#fbd3a0" stroke-width="3.6"/>
<rect x="619.6" y="503.4" width="16.2" height="18.8" rx="2.4" fill="#f3e0c0" stroke="#c9ac82" stroke-width="1"/><text x="627.7" y="517" text-anchor="middle" font-family="Liberation Sans" font-size="9.6" font-weight="bold" fill="#6b5a3a">6</text>
<text transform="translate(661 423) rotate(-72)" font-family="Liberation Sans" font-size="8.6" fill="#4a4030">Roskildevej</text>
<polygon points="729,394 745,382 760,379 1062,379 1064,400 1056,420 1060,440 1050,462 1040,476 1026,490 1012,492 1004,500 990,498 984,510 980,540 831,540 832,520 836,500 839,471.5 728,466 726,430" fill="url(#pg)"/>
<polygon points="776,432 890,424 905,452 840,470 776,464" fill="url(#pg2)"/>
<polygon points="780,408 890,400 892,424 778,432" fill="url(#pg2)"/>
<polygon points="920,440 1050,420 1058,460 1030,490 984,500 980,540 920,540" fill="url(#pg3)"/>
<polygon points="847.4,491 872,486.9 894.6,503.4 921.3,528 917.2,540 863.8,540 853.5,519.8" fill="#cdf6cf"/>
<polygon points="832,452 874,448 876,456 834,462" fill="#c8facc"/><polygon points="726,452 740,450 740,464 726,466" fill="#c8facc"/><polygon points="800,416 812,414 812,428 800,430" fill="#c8facc"/><polygon points="828,394 846,390 850,410 832,414" fill="#c8facc"/><polygon points="834,396 846,394 848,406 836,408" fill="#aad3df"/><polygon points="770,379 800,379 802,388 786,396 774,392" fill="#eef0c8"/><polygon points="800,379 818,379 814,392 802,390" fill="#f3f1c0"/>
<polygon points="938.8,441.7 965.5,441 965.5,457 940,458" fill="#f6cfcb"/><polygon points="982,452 992,452 992,486 982,486" fill="#add19e"/><polygon points="1004,379 1034,379 1030,396 1016,406 1002,396" fill="#e8f0c0"/><polygon points="966,379 1000,379 996,400 974,402" fill="#c8f0d0"/><polygon points="936,410 950,406 952,420 938,422" fill="#e8f0c0"/><polygon points="996,520 1010,516 1014,540 996,540" fill="#b5e3c5"/>
<path d="M720 467.4 L780 467 L839.1 471.5 L905.9 452.4 L940 436 L972.7 420.2 L1000 404 L1018 379" fill="none" stroke="#cfcfcf" stroke-width="4.2" stroke-linecap="round" stroke-linejoin="round"/>
<path d="M720 467.4 L780 467 L839.1 471.5 L905.9 452.4 L940 436 L972.7 420.2 L1000 404 L1018 379" fill="none" stroke="#fff" stroke-width="3" stroke-linecap="round" stroke-linejoin="round"/>
<path d="M767 379 C770 404 790 420 824 420 C858 420 880 404 884 379" fill="none" stroke="#cfcfcf" stroke-width="3.6"/><path d="M767 379 C770 404 790 420 824 420 C858 420 880 404 884 379" fill="none" stroke="#fff" stroke-width="2.4"/>
<path d="M791.9 406.8 C782 420 778 430 777.5 437.6 L775.5 464.3" fill="none" stroke="#cfcfcf" stroke-width="3.4000000000000004" stroke-linecap="round" stroke-linejoin="round"/>
<path d="M791.9 406.8 C782 420 778 430 777.5 437.6 L775.5 464.3" fill="none" stroke="#fff" stroke-width="2.2" stroke-linecap="round" stroke-linejoin="round"/>
<path d="M791.9 406.8 L816 386 L824 379" fill="none" stroke="#cfcfcf" stroke-width="3.2" stroke-linecap="round" stroke-linejoin="round"/>
<path d="M791.9 406.8 L816 386 L824 379" fill="none" stroke="#fff" stroke-width="2.0" stroke-linecap="round" stroke-linejoin="round"/>
<path d="M872 404 L892 424 L905.9 452.4" fill="none" stroke="#cfcfcf" stroke-width="3.0" stroke-linecap="round" stroke-linejoin="round"/>
<path d="M872 404 L892 424 L905.9 452.4" fill="none" stroke="#fff" stroke-width="1.8" stroke-linecap="round" stroke-linejoin="round"/>
<path d="M905.9 452.4 L914 480 L940 520 L960 540" fill="none" stroke="#fff" stroke-width="1.6" stroke-linecap="round" stroke-linejoin="round"/>
<path d="M839.1 471.5 L836 500 L832 540" fill="none" stroke="#fff" stroke-width="1.6" stroke-linecap="round" stroke-linejoin="round"/>
<path d="M972.7 420.2 L1010 440 L1040 476" fill="none" stroke="#fff" stroke-width="1.6" stroke-linecap="round" stroke-linejoin="round"/>
<path d="M736 404 L750 396 L770 392" fill="none" stroke="#2a2ae0" stroke-width="1.1" stroke-dasharray="1.1 2" stroke-opacity=".9"/>
<path d="M740 420 L752 426 L762 420 L770 430" fill="none" stroke="#2a2ae0" stroke-width="1.1" stroke-dasharray="1.1 2" stroke-opacity=".9"/>
<path d="M752 440 L766 446 L776 440" fill="none" stroke="#2a2ae0" stroke-width="1.1" stroke-dasharray="1.1 2" stroke-opacity=".9"/>
<path d="M820 384 L832 392 L846 388 L860 392" fill="none" stroke="#2a2ae0" stroke-width="1.1" stroke-dasharray="1.1 2" stroke-opacity=".9"/>
<path d="M962 379 L968 392 L980 396" fill="none" stroke="#2a2ae0" stroke-width="1.1" stroke-dasharray="1.1 2" stroke-opacity=".9"/>
<path d="M1030 440 L1050 430 L1060 412 L1058 392" fill="none" stroke="#2a2ae0" stroke-width="1.1" stroke-dasharray="1.1 2" stroke-opacity=".9"/>
<path d="M832 520 L840 500 L848 491" fill="none" stroke="#2a2ae0" stroke-width="1.1" stroke-dasharray="1.1 2" stroke-opacity=".9"/>
<path d="M745 400 L760 410 L756 430 L740 440 L748 452" fill="none" stroke="#2a2ae0" stroke-width="1.1" stroke-dasharray="1.1 2" stroke-opacity=".9"/>
<path d="M790 390 L830 404 L870 400 L884 386" fill="none" stroke="#2a2ae0" stroke-width="1.1" stroke-dasharray="1.1 2" stroke-opacity=".9"/>
<path d="M800 404 V430 M812 404 V430 M824 406 V430 M836 406 V430 M848 404 V430 M860 404 V428" fill="none" stroke="#2a2ae0" stroke-width="1.1" stroke-dasharray="1.1 2" stroke-opacity=".9"/>
<path d="M884 386 L900 400 L904 410" fill="none" stroke="#2a2ae0" stroke-width="1.1" stroke-dasharray="1.1 2" stroke-opacity=".9"/>
<path d="M847 491 L872 487 L895 503 L921 528 L917 540" fill="none" stroke="#2a2ae0" stroke-width="1.1" stroke-dasharray="1.1 2" stroke-opacity=".9"/>
<path d="M847 491 L848 476 L862 470" fill="none" stroke="#2a2ae0" stroke-width="1.1" stroke-dasharray="1.1 2" stroke-opacity=".9"/>
<path d="M895 503 L898 470 L894 462" fill="none" stroke="#2a2ae0" stroke-width="1.1" stroke-dasharray="1.1 2" stroke-opacity=".9"/>
<path d="M920 462 L940 466 L944 500" fill="none" stroke="#2a2ae0" stroke-width="1.1" stroke-dasharray="1.1 2" stroke-opacity=".9"/>
<path d="M930 380 L936 410 L950 424 L964 420" fill="none" stroke="#2a2ae0" stroke-width="1.1" stroke-dasharray="1.1 2" stroke-opacity=".9"/>
<path d="M980 500 L1000 498 L1004 540" fill="none" stroke="#2a2ae0" stroke-width="1.1" stroke-dasharray="1.1 2" stroke-opacity=".9"/>
<path d="M986 540 L988 516" fill="none" stroke="#2a2ae0" stroke-width="1.1" stroke-dasharray="1.1 2" stroke-opacity=".9"/>
<path d="M1004 470 L1040 440 L1046 420" fill="none" stroke="#2a2ae0" stroke-width="1.1" stroke-dasharray="1.1 2" stroke-opacity=".9"/>
<path d="M1000 404 L1016 390 L1036 382" fill="none" stroke="#2a2ae0" stroke-width="1.1" stroke-dasharray="1.1 2" stroke-opacity=".9"/>
<path d="M920.3 379 C924 396 928 412 931.6 427.4 C934 440 936 452 937.8 464.3 C940 478 943 492 946 503.4 C950 518 956 530 964.5 540" fill="none" stroke="#b0b0b0" stroke-width="3.2"/><path d="M920.3 379 C924 396 928 412 931.6 427.4 C934 440 936 452 937.8 464.3 C940 478 943 492 946 503.4 C950 518 956 530 964.5 540" fill="none" stroke="#6b6b6b" stroke-width="1.8"/>
<path d="M940.6 379 C960 398 990 420 1020.4 442.4 C1045 460 1070 476 1095.5 494 C1125 512 1155 526 1182.4 540" fill="none" stroke="#c8c878" stroke-width="5"/><path d="M940.6 379 C960 398 990 420 1020.4 442.4 C1045 460 1070 476 1095.5 494 C1125 512 1155 526 1182.4 540" fill="none" stroke="#f6f7b6" stroke-width="3.8"/>
<text transform="translate(1092 497.5) rotate(28.6)" font-family="Liberation Sans" font-size="8.8" fill="#3c3c2c">Frederikssundsvej</text>
<polygon points="1084,448 1090,444 1110,452 1150,458 1164,470 1160,476 1140,466 1100,462" fill="#add19e"/><polygon points="1076,462 1090,460 1110,480 1130,486 1128,492 1104,488" fill="#add19e"/><polygon points="1107.3,463 1126,461 1154.2,466 1152,477.6 1130,478 1110,474" fill="#aad3df"/><polygon points="1150,476 1164,480 1172,500 1160,498" fill="#add19e"/>
<polygon points="1060,486 1066,484 1076,520 1068,524" fill="#add19e"/><polygon points="1056,516 1064,512 1070,530 1060,540 1054,530" fill="#add19e"/><polygon points="1178,480 1186,478 1188,500 1180,504" fill="#add19e"/>
<polygon points="1205.9,452 1230,444.8 1236.4,470 1214,482.3" fill="url(#dots)"/><polygon points="1230,450 1246,456 1240,480 1226,474" fill="#b5dba0"/>
<polygon points="1098,426 1114,426 1114,434 1098,434" fill="#f5dcba"/><polygon points="1134,494 1150,490 1152,510 1136,512" fill="#f5dcba"/><polygon points="1098,510 1108,510 1108,526 1098,526" fill="#f5dcba"/><polygon points="1276,456 1286,454 1288,466 1278,468" fill="#f5dcba"/><polygon points="1232,500 1240,498 1242,510 1234,512" fill="#f5dcba"/><polygon points="1076,496 1084,494 1086,506 1078,508" fill="#f5dcba"/>
<polygon points="1196,516 1214,512 1220,540 1198,540" fill="#add19e"/>
<path d="M1018 440 L1040 432 L1060.3 426 L1090.8 415.4 L1120 415 L1154.2 417.8 L1182.4 428.3 L1236.4 447.1 L1271.6 470.6 L1295 458.9 L1326 455.3" fill="none" stroke="#cfcfcf" stroke-width="3.5999999999999996" stroke-linecap="round" stroke-linejoin="round"/>
<path d="M1018 440 L1040 432 L1060.3 426 L1090.8 415.4 L1120 415 L1154.2 417.8 L1182.4 428.3 L1236.4 447.1 L1271.6 470.6 L1295 458.9 L1326 455.3" fill="none" stroke="#fff" stroke-width="2.4" stroke-linecap="round" stroke-linejoin="round"/>
<path d="M1182.4 428.3 C1176 440 1172 448 1173 454.2 C1176 464 1180 470 1180 477.6 C1178 490 1174 496 1175.4 503.5 C1180 518 1190 530 1196.5 540" fill="none" stroke="#cfcfcf" stroke-width="3.2" stroke-linecap="round" stroke-linejoin="round"/>
<path d="M1182.4 428.3 C1176 440 1172 448 1173 454.2 C1176 464 1180 470 1180 477.6 C1178 490 1174 496 1175.4 503.5 C1180 518 1190 530 1196.5 540" fill="none" stroke="#fff" stroke-width="2.0" stroke-linecap="round" stroke-linejoin="round"/>
<path d="M1182.4 428.3 L1192 404 L1206 388 L1232 379" fill="none" stroke="#cfcfcf" stroke-width="3.0" stroke-linecap="round" stroke-linejoin="round"/>
<path d="M1182.4 428.3 L1192 404 L1206 388 L1232 379" fill="none" stroke="#fff" stroke-width="1.8" stroke-linecap="round" stroke-linejoin="round"/>
<path d="M1154.2 417.8 L1156 396 L1150 379" fill="none" stroke="#fff" stroke-width="1.2" stroke-linecap="round" stroke-linejoin="round"/>
<path d="M1271.6 470.6 L1248 496 L1236 494 M1260 482 L1244 520" fill="none" stroke="#fff" stroke-width="1.2" stroke-linecap="round" stroke-linejoin="round"/>
<polygon points="1190,384 1230,380 1232,392 1200,400" fill="#dddcdc"/>
<text x="1173" y="422" font-family="Liberation Sans" font-size="11.6" fill="#3c3c3c" stroke="#eef0d5" stroke-width="1.6" paint-order="stroke">Søsum</text>
<polygon points="1322,456 1352,455 1352,495 1340,500 1322,494" fill="#add19e"/>
<polygon points="1267,500 1290,490 1320,496 1340,500 1350,520 1350,540 1290,540 1296,520 1268,516" fill="#add19e"/>
<polygon points="1338,390 1354,388 1354,412 1342,414" fill="#add19e"/>
<polygon points="1430,379 1478,379 1478,396 1452,400 1432,392" fill="#add19e"/>
<polygon points="1237,390 1262,386 1272,400 1262,414 1240,412" fill="#cdebb0"/>
<polygon points="1450,443 1486,456 1483,462 1448,450" fill="#cdebb0"/>
<polygon points="1384,488 1400,486 1400,510 1386,512" fill="#cdebb0"/>
<polygon points="1538,470 1558,465 1554,480 1538,484" fill="#cdebb0"/>
<polygon points="1283,434 1320,431 1340,436 1338,441 1300,441 1284,440" fill="#aad3df"/>
<polygon points="1253,522 1274,517 1294,522 1292,536 1260,537" fill="#aad3df"/>
<polygon points="1526,396 1542,396 1542,402 1526,402" fill="#aad3df"/>
<polygon points="1534,487 1544,486 1542,503 1533,504" fill="#aad3df"/>
<polygon points="1480,380 1490,380 1490,388 1480,388" fill="#aad3df"/>
<polygon points="1418,426 1432,426 1432,456 1420,456" fill="#f5dcba"/>
<polygon points="1414,426 1424,424 1424,434 1414,434" fill="#f5dcba"/>
<polygon points="1473,475 1482.6,475 1482.6,484 1473,484" fill="#f5dcba"/>
<polygon points="1496,460 1503,460 1503,468 1496,468" fill="#f5dcba"/>
<polygon points="1572,464 1585.8,464 1585.8,472 1572,472" fill="#f5dcba"/>
<polygon points="1340,392 1348,390 1348,398 1340,398" fill="#f5dcba"/>
<polygon points="1356,398 1364,396 1366,412 1358,414" fill="#f5dcba"/>
<polygon points="1276,456 1286,454 1288,466 1278,468" fill="#f5dcba"/>
<polygon points="1232,500 1240,498 1242,510 1234,512" fill="#f5dcba"/>
<polygon points="1366,500 1374,498 1374,510 1368,510" fill="#f5dcba"/>
<polygon points="1386,502 1394,500 1394,512 1388,512" fill="#f5dcba"/>
<polygon points="1315,446 1354,445 1354,452 1316,453" fill="#e6d8e8"/>
<polygon points="1494,492 1518,498 1519,506 1494,500" fill="#e6d8e8"/>
<polygon points="1310,466 1322,464 1322,480 1312,484" fill="#e6d8e8"/>
<polygon points="1318,496 1326,494 1326,510 1320,512" fill="#e6d8e8"/>
<polygon points="1440,482 1482.6,482 1482.6,500 1480,534 1458,536 1456,512 1444,508" fill="url(#dots)"/>
<polygon points="1440,470 1452,472 1470,482 1440,484" fill="#c4e6ac"/>
<polygon points="1428,452 1444,436 1448,440 1434,460" fill="#add19e"/>
<polygon points="1420,504 1426,502 1428,532 1422,534" fill="#add19e"/>
<polygon points="1298,530 1340,524 1348,540 1300,540" fill="#add19e"/>
<path d="M1316 455 L1351.9 452.8 L1381.7 442.5 L1390.9 421.9 L1397.8 394.3 L1407 379.4" fill="none" stroke="#cfcfcf" stroke-width="3.5999999999999996" stroke-linecap="round" stroke-linejoin="round"/>
<path d="M1316 455 L1351.9 452.8 L1381.7 442.5 L1390.9 421.9 L1397.8 394.3 L1407 379.4" fill="none" stroke="#fff" stroke-width="2.4" stroke-linecap="round" stroke-linejoin="round"/>
<path d="M1356.5 454 L1358.8 470 L1397.8 490.6 C1400 506 1398 520 1395.5 540" fill="none" stroke="#cfcfcf" stroke-width="2.8" stroke-linecap="round" stroke-linejoin="round"/>
<path d="M1356.5 454 L1358.8 470 L1397.8 490.6 C1400 506 1398 520 1395.5 540" fill="none" stroke="#fff" stroke-width="1.6" stroke-linecap="round" stroke-linejoin="round"/>
<path d="M1352 454 L1338 540" fill="none" stroke="#fff" stroke-width="1.4" stroke-linecap="round" stroke-linejoin="round"/>
<path d="M1317.5 486 L1326.7 511 L1299 516" fill="none" stroke="#fff" stroke-width="1.2" stroke-linecap="round" stroke-linejoin="round"/>
<path d="M1390.9 426 L1418 430" fill="none" stroke="#fff" stroke-width="1.2" stroke-linecap="round" stroke-linejoin="round"/>
<path d="M1503 464 L1537.6 419.6 L1569.7 410.4 L1580 410 M1475.7 502 L1493 502 L1493 490.6 L1569.7 513.6 L1580 516" fill="none" stroke="#d4d4d4" stroke-width="2"/><path d="M1503 464 L1537.6 419.6 L1569.7 410.4 L1580 410 M1475.7 502 L1493 502 L1493 490.6 L1569.7 513.6 L1580 516" fill="none" stroke="#fff" stroke-width="1.2"/>
<polygon points="1552,379 1580,379 1580,394 1572,410 1560,406 1556,392" fill="#dddcdc"/>
<polygon points="1586,379 1752,379 1752,528 1700,528 1660,524 1636,520 1624,508 1616,490 1606,470 1600,450 1594,430 1588,410" fill="#dcf6e0"/>
<polygon points="1590,400 1606,402 1604,422 1594,424" fill="#c2d8a0" opacity=".6"/><polygon points="1600,430 1646,440 1652,462 1620,462 1606,452" fill="#c6e0a8" opacity=".55"/><rect x="1596" y="398" width="14" height="24" fill="url(#wet)"/><rect x="1604" y="432" width="58" height="40" fill="url(#wet)"/><rect x="1616" y="470" width="30" height="40" fill="url(#wet)"/>
<polygon points="1616,392 1634,390 1638,410 1630,422 1620,420" fill="#aad3df"/><polygon points="1600,404 1606,402 1604,418 1598,420" fill="#aad3df"/><polygon points="1642,484 1652,480 1656,492 1646,496" fill="#b9dfa4"/><polygon points="1650,446 1656,444 1658,454 1652,456" fill="#b9dfa4"/>
<path d="M1660 448 L1700 478 L1730 516 M1590 424 L1620 470 L1640 510 L1680 524" fill="none" stroke="#a8c8a8" stroke-width=".8" stroke-dasharray="3 2"/>
<polygon points="1700,379 1752,379 1752,400 1738,396 1720,388 1704,386" fill="#dddcdc"/><path d="M1664 500 C1660 486 1668 478 1672 472 C1676 478 1672 486 1668 500 C1680 520 1700 524 1752 522" fill="none" stroke="#ddd" stroke-width="2"/><polygon points="1730,500 1752,496 1752,528 1734,526" fill="#dcdcdc"/>
<path d="M1748 448 L1746 460" stroke="#2a6a2a" stroke-width="1.4"/>
<path d="M1582.5 379 L1582.5 440 C1584 456 1590 466 1591 477.6 C1592 500 1588 520 1586 540" fill="none" stroke="#c8c878" stroke-width="5.6"/><path d="M1582.5 379 L1582.5 440 C1584 456 1590 466 1591 477.6 C1592 500 1588 520 1586 540" fill="none" stroke="#f6f7b6" stroke-width="4.2"/>
<text transform="translate(1591 537) rotate(-86)" font-family="Liberation Sans" font-size="8.6" fill="#3c3c2c">Knardrupvej</text>
<path d="M1580 520 L1586 516" fill="none" stroke="#fff" stroke-width="1.2" stroke-linecap="round" stroke-linejoin="round"/>
<text x="63.4" y="392.4" font-family="Liberation Sans" font-size="12.5" fill="#444">Hyllingeriis</text>
<text x="342.4" y="455" font-family="Liberation Sans" font-size="13.3" fill="#3c3c3c" stroke="#e6e6e6" stroke-width="2" paint-order="stroke" letter-spacing=".3">Nordmark</text>
<text x="449.6" y="435.6" font-family="Liberation Sans" font-size="12.1" fill="#3c3c3c" stroke="#e6e6e6" stroke-width="2" paint-order="stroke" letter-spacing=".2">Tangbjerg</text>
<text transform="translate(449 447) rotate(30)" font-family="Liberation Sans" font-size="9.4" font-style="italic" fill="#5b7ec0">Værebro Å</text>
<text transform="translate(561 507) rotate(32)" font-family="Liberation Sans" font-size="9.4" fill="#7a6a88">Region Ho</text>
<text x="966.6" y="452" font-family="Liberation Sans" font-size="11.9" fill="#3c3c3c" stroke="#e6e6e6" stroke-width="2" paint-order="stroke" letter-spacing=".15">Stenløse</text>
<path d="M905.9 452.2 C903 445 899 442.4 895.4 438.8 C892.4 435.8 890.7 432 890.7 427.9 C890.7 419.5 897.5 412.8 905.9 412.8 C914.3 412.8 921.1 419.5 921.1 427.9 C921.1 432 919.4 435.8 916.4 438.8 C912.8 442.4 908.8 445 905.9 452.2 Z" fill="#62c933" stroke="#111" stroke-width="1.5" stroke-linejoin="round"/></svg>
<!--/MAPSVG-->
</div>
<!--MAPCTL-->
<svg class="abs" style="left:72px;top:283px" width="24" height="30" viewBox="72 283 24 30"><rect x="74.9" y="289.5" width="17.1" height="19.8" rx="2" fill="#fafafa" stroke="#8b8b8b" stroke-width="1.6"/><path d="M79 291.2 L79 288.6 Q80.6 287.6 81.2 286.8 A2.5 2.5 0 0 1 85.8 286.8 Q86.4 287.6 88 288.6 L88 291.2 Z" fill="#8b8b8b"/><path d="M78.1 294.7 H88.9 M78.1 298 H88.9 M78.1 301.2 H88.9 M78.1 304.4 H88.9" stroke="#9a9a9a" stroke-width="1.3"/></svg>
<svg class="abs" style="left:1664.9px;top:282.1px;overflow:visible" width="28.6" height="30.8" viewBox="0 0 28.6 29.4" preserveAspectRatio="none"><polyline points="1.4,12.6 14,1.7 27.2,12.9" fill="none" stroke="#b4b4b4" stroke-width="2.9" stroke-linecap="round" stroke-linejoin="miter"/><path d="M4,15.6 L14.1,6.9 L24.3,15.6 L24.3,27.7 Q24.3,29.2 22.8,29.2 L17,29.2 L17,21.3 L11.6,21.3 L11.6,29.2 L5.5,29.2 Q4,29.2 4,27.7 Z" fill="#b4b4b4"/></svg>
<svg class="abs" style="left:1714px;top:287.6px" width="23.2" height="25.9" viewBox="0 0 100 110" preserveAspectRatio="none"><path d="M50,0 C64,0 73.5,10 73.5,25 C73.5,36 69,44 65,49 C62,53 62,58 64,62 C68,68 80,72 88,78 C96,84 99,96 100,110 L0,110 C1,96 4,84 12,78 C20,72 32,68 36,62 C38,58 38,53 35,49 C31,44 26.5,36 26.5,25 C26.5,10 36,0 50,0 Z" fill="#871c6c"/></svg>
<svg class="abs" style="left:1688.4px;top:554.2px" width="58.8" height="63.8" viewBox="0 0 100 110" preserveAspectRatio="none"><path d="M50,0 C64,0 73.5,10 73.5,25 C73.5,36 69,44 65,49 C62,53 62,58 64,62 C68,68 80,72 88,78 C96,84 99,96 100,110 L0,110 C1,96 4,84 12,78 C20,72 32,68 36,62 C38,58 38,53 35,49 C31,44 26.5,36 26.5,25 C26.5,10 36,0 50,0 Z" fill="#8a1a6d"/></svg>
<div class="abs" style="left:1686px;top:629px;width:66px;height:52.5px;border:1px solid #e2e2e2;background:#f8f8f8"></div>
<svg class="abs" style="left:1703.8px;top:631.6px;overflow:visible" width="29.8" height="30.2" viewBox="0 0 28.6 29.4" preserveAspectRatio="none"><polyline points="1.4,12.6 14,1.7 27.2,12.9" fill="none" stroke="#b6b6b6" stroke-width="2.9" stroke-linecap="round" stroke-linejoin="miter"/><path d="M4,15.6 L14.1,6.9 L24.3,15.6 L24.3,27.7 Q24.3,29.2 22.8,29.2 L17,29.2 L17,21.3 L11.6,21.3 L11.6,29.2 L5.5,29.2 Q4,29.2 4,27.7 Z" fill="#b6b6b6"/></svg>
<div class="t" style="left:1693.4px;top:665.6px;font-size:14px;color:#222;text-decoration:underline">Checkin</div>
<svg class="abs" style="left:0;top:215px" width="24" height="80" viewBox="0 215 24 80"><path d="M0 219.5 L1.5 219.5 L19.6 236.5 L19.6 274.5 L1.5 288.5 L0 288.5 Z" fill="#f3f3f3" stroke="#dedede" stroke-width="1"/><text transform="translate(4.7 237.6) rotate(90)" font-family="Liberation Sans" font-weight="bold" font-size="10.5" fill="#a2a2a2" letter-spacing=".55">QUICK</text></svg>
<div class="abs" style="left:74.3px;top:389.6px;width:28px;height:57px;background:#fff;border-radius:4px;box-shadow:0 1px 4px rgba(0,0,0,.45)"></div>
<div class="abs" style="left:74.3px;top:417px;width:28px;height:1px;background:#ccc"></div>
<svg class="abs" style="left:74px;top:389px" width="30" height="58" viewBox="74 389 30 58"><path d="M83.6 403 H94.2 M88.9 397.7 V408.3" stroke="#111" stroke-width="2"/><path d="M84.2 430.9 H93.6" stroke="#111" stroke-width="2"/></svg>
<div class="abs" style="left:1702.2px;top:389.2px;width:39.2px;height:38.8px;background:#fff;border-radius:5px;box-shadow:0 1px 5px rgba(0,0,0,.4)"></div>
<svg class="abs" style="left:1702px;top:389px" width="40" height="40" viewBox="1702 389 40 40"><path d="M1708 413.6 L1722 406.4 L1736 413.6 L1722 420.8 Z" fill="#b8b8b8" stroke="#9a9a9a" stroke-width=".6"/><path d="M1708 409.4 L1722 402.2 L1736 409.4 L1722 416.6 Z" fill="#c9c9c9" stroke="#a8a8a8" stroke-width=".6"/><path d="M1708 404.8 L1722 397.6 L1736 404.8 L1722 412 Z" fill="#e2e2e2" stroke="#bdbdbd" stroke-width=".6"/></svg>
<div class="abs" style="left:1702.2px;top:474px;width:39.2px;height:38.6px;background:#fff;border-radius:5px;box-shadow:0 1px 5px rgba(0,0,0,.4)"></div>
<svg class="abs" style="left:1702px;top:474px" width="40" height="40" viewBox="1702 474 40 40"><path d="M1708.6 493.4 C1712 487.4 1717 485.2 1721.8 485.2 C1726.6 485.2 1731.6 487.4 1735 493.4 C1731.6 499.4 1726.6 501.6 1721.8 501.6 C1717 501.6 1712 499.4 1708.6 493.4 Z" fill="#111"/><circle cx="1721.8" cy="493.4" r="4.6" fill="#fff"/><circle cx="1721.8" cy="493.4" r="2.5" fill="#111"/><path d="M1710.6 483.6 L1733.4 503.4" stroke="#fff" stroke-width="4.4"/><path d="M1710 484.6 L1732.6 504.2" stroke="#111" stroke-width="2.2" stroke-linecap="round"/></svg>
<div class="abs" style="left:1598.5px;top:524.3px;width:153.5px;height:15.7px;background:rgba(255,255,255,.78)"></div>
<div class="t" style="left:1603.2px;top:524.6px;font-size:11.75px;color:#0a7aa8;letter-spacing:.03px">Leaflet <span style="color:#444">|</span> Terms &amp; Feedback</div>
<!--/MAPCTL-->
<!--TABLE-->
<div class="lb" style="left:108px;top:557px">Task type</div>
<div class="vl" style="left:291px;top:557px">Adhoc</div>
<div class="lb" style="left:108px;top:580px">Status</div>
<div class="vl" style="left:291px;top:580px"><span style="background:#5fd035;padding:0 1px 0 2.5px;margin-left:-0.5px">Planlagt/Aktiv</span></div>
<div class="lb" style="left:108px;top:604px">Work area</div>
<div class="vl" style="left:291px;top:604px">Service</div>
<div class="lb" style="left:108px;top:627px">Priority</div>
<div class="vl" style="left:291px;top:627px">3 (Normal)</div>
<div class="lb" style="left:108px;top:650px">Invoice policy</div>
<div class="vl" style="left:291px;top:650px">Invoiced by the hour</div>
<div class="lb" style="left:108px;top:674px">Consolidated</div>
<div class="vl" style="left:291px;top:674px">No</div>
<div class="lb" style="left:108px;top:698px">Cost price</div>
<div class="vl" style="left:291px;top:697px">0.00</div>
<div class="lb" style="left:108px;top:721px">Profit</div>
<div class="vl" style="left:291px;top:721px">0.00</div>
<div class="lb" style="left:108px;top:745px">Profit margin</div>
<div class="vl" style="left:291px;top:745px">-</div>
<div class="lb" style="left:108px;top:768px">Exp. Profit margin</div>
<div class="vl" style="left:291px;top:768px">-</div>
<div class="lb" style="left:622px;top:557px">Created the</div>
<div class="vl" style="left:804.5px;top:557px">2023-03-02</div>
<div class="lb" style="left:622px;top:580px">Task start</div>
<div class="vl" style="left:804.5px;top:580px">2023-03-02<svg style="display:inline-block;vertical-align:0px;margin-left:4px" width="9" height="11" viewBox="0 0 9 11"><path d="M6.2 0.6 L8.4 2 L3.4 9.2 L1 10.4 L1.2 7.8 Z" fill="#777" stroke="#555" stroke-width=".6"/><path d="M5.2 2.2 L7.3 3.6" stroke="#ddd" stroke-width=".7"/></svg></div>
<div class="lb" style="left:622px;top:604px">Deadline</div>
<div class="vl" style="left:804.5px;top:604px">(none)<svg style="display:inline-block;vertical-align:0px;margin-left:4px" width="9" height="11" viewBox="0 0 9 11"><path d="M6.2 0.6 L8.4 2 L3.4 9.2 L1 10.4 L1.2 7.8 Z" fill="#777" stroke="#555" stroke-width=".6"/><path d="M5.2 2.2 L7.3 3.6" stroke="#ddd" stroke-width=".7"/></svg></div>
<div class="lb" style="left:622px;top:627px">Location</div>
<div class="vl" style="left:804.5px;top:627px">(55.7672,12.1854)</div>
<div class="lb" style="left:622px;top:650px">Opgaven skal indmåles</div>
<div class="vl" style="left:804.5px;top:650px">No</div>
<div class="lb" style="left:622px;top:674px">KEY</div>
<div class="vl" style="left:804.5px;top:674px">1</div>
<div class="lb" style="left:622px;top:698px">Fiberblæst?</div>
<div class="vl" style="left:804.5px;top:697px">No</div>
<div class="lb" style="left:622px;top:721px">Abonnement</div>
<div class="vl" style="left:804.5px;top:721px">No</div>
<div class="lb" style="left:1136px;top:557px">Address</div>
<div class="lb" style="left:1136px;top:610px">Task #</div>
<div class="vl" style="left:1318.5px;top:610px">12706</div>
<div class="lb" style="left:1136px;top:634px">Responsible</div>
<div class="vl" style="left:1318.5px;top:634px"><u>TESTs</u></div>
<div class="lb" style="left:1136px;top:657px">Team</div>
<div class="vl" style="left:1318.5px;top:657px"><u>New team</u></div>
<div class="lb" style="left:1136px;top:681px">Created by</div>
<div class="vl" style="left:1318.5px;top:681px"><u>TESTs</u></div>
<div class="lb" style="left:1136px;top:705px">Next planning</div>
<div class="vl" style="left:1318.5px;top:705px">(none)</div>
<div class="lb" style="left:1136px;top:728px">Last planned date</div>
<div class="vl" style="left:1318.5px;top:728px">2023-02-28 09:30</div>
<div class="lb" style="left:1136px;top:752px">Latest planning</div>
<div class="vl" style="left:1318.5px;top:752px">2023-02-28 09:30</div>
<div class="lb" style="left:1136px;top:776px">Time estimate</div>
<div class="vl" style="left:1318.5px;top:776px">0:00</div>
<div class="lb" style="left:1136px;top:798px">Registered</div>
<div class="vl" style="left:1318.5px;top:798px">0:00</div>
<div class="vl" style="left:1318.4px;top:557px;line-height:16px">Bauneholmvej 1</div><div class="vl" style="left:1315.5px;top:572px;line-height:16px">3660 Stenløse</div><div class="vl" style="left:1315.5px;top:587px;line-height:16px">Denmark</div>
<div class="vd" style="left:614.5px"></div><div class="vd" style="left:1128.5px"></div>
<!--/TABLE-->
<!--DROPDOWN-->
<div class="abs" id="dd">
<div style="border-top:none;top:0px;height:34px;padding-left:12px;letter-spacing:-0.3px;line-height:31.6px">SEARCH</div>
<div style="top:34px;height:34.5px;padding-left:12px;letter-spacing:-0.13px;line-height:30.1px">SEARCH WITH FILTER</div>
<div class="on" style="top:68.5px;height:33.8px;left:-1px;width:162.3px;padding-left:12px;letter-spacing:-0.08px;line-height:30px">CREATE TASK</div>
<div style="top:102.3px;height:34.2px;padding-left:11px;letter-spacing:0.02px;line-height:31.2px">CREATE PROJECT</div>
<div style="top:136.5px;height:34.4px;padding-left:11px;letter-spacing:-0.1px;line-height:31.8px">FROM TEMPLATE</div>
<div style="top:170.9px;height:33.8px;padding-left:11px;letter-spacing:-0.05px;line-height:31.2px">PEND. APPROVAL</div>
<div style="top:204.7px;height:35.4px;padding-left:11px;letter-spacing:0.0px;line-height:32.8px">PEND. INVOICING</div>
</div>
<!--CURSOR-->
<svg class="abs" style="left:482px;top:257.4px" width="18" height="24" viewBox="0 0 18 24"><path d="M4.6 1.4 C5.8 0.6 7 1.2 7 2.6 L7 9.2 L7.6 9.2 C8 8 9.8 8 10.2 9.4 C10.8 8.6 12.6 8.8 12.8 10.2 C13.6 9.6 15.2 10 15.2 11.6 L15.2 16 C15.2 19 13.8 20.4 13.4 22.4 L6.4 22.4 C5.6 20 3 17.6 1.6 15.2 C1 14 2.4 12.8 3.6 14 L4.6 15 L4.6 2.6 Z" fill="#fff" stroke="#222" stroke-width="1.1" stroke-linejoin="round"/><path d="M7.4 12 V15.6 M10 12 V15.6 M12.6 12.4 V15.6" stroke="#222" stroke-width=".8"/></svg>
<!--/CURSOR-->
<!--QUICK-->
<!--SCROLL-->
<div class="abs" id="sbt"></div>
<div class="abs" id="sbh"></div>
<div class="abs" id="topline"></div>
</body>
</html>
